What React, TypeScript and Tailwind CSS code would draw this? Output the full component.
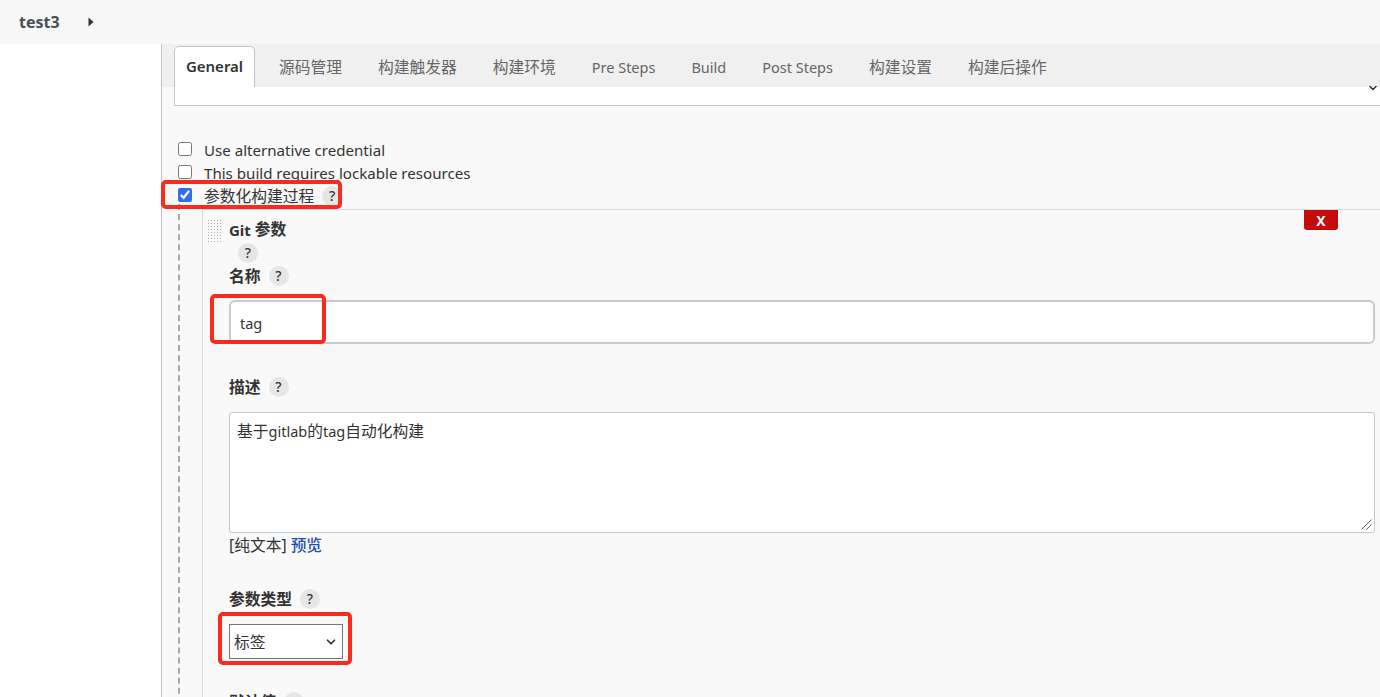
import type { ReactNode } from "react";
import { ChevronDown } from "lucide-react";

const tabs = [
  { label: "源码管理", size: "text-[15.75px]" },
  { label: "构建触发器", size: "text-[15.75px]" },
  { label: "构建环境", size: "text-[15.75px]" },
  { label: "Pre Steps", size: "text-[14.5px]" },
  { label: "Build", size: "text-[14.5px]" },
  { label: "Post Steps", size: "text-[14.5px]" },
  { label: "构建设置", size: "text-[15.75px]" },
  { label: "构建后操作", size: "text-[15.75px]" },
];

function Help({ className = "" }: { className?: string }) {
  return (
    <span className={`flex h-5 w-5 shrink-0 items-center justify-center rounded-full bg-[#e6e6e6] text-[14px] font-medium leading-none text-[#333] ${className}`}>
      ?
    </span>
  );
}

function CheckRow({ children, checked = false, help = false }: { children: ReactNode; checked?: boolean; help?: boolean }) {
  return (
    <div className="flex h-[23px] items-center">
      <input type="checkbox" defaultChecked={checked} className="mb-[2px] ml-[16px] h-[14px] w-[14px] accent-[#2f6fed]" />
      <span className="ml-[12px] mt-[1px] text-[#333]">{children}</span>
      {help && <Help className="ml-[8px] mt-[1px]" />}
    </div>
  );
}

function FieldLabel({ label }: { label: string }) {
  return (
    <div className="flex h-[24px] items-center">
      <span className="mt-[2px] text-[15.75px] font-semibold text-[#333]">{label}</span>
      <Help className="ml-[8px]" />
    </div>
  );
}

export default function App() {
  return (
    <div className="relative h-[697px] w-[1380px] overflow-hidden bg-white font-['Noto_Sans','Noto_Sans_CJK_SC',sans-serif]">
      {/* Top bar */}
      <div className="flex h-[44px] items-center bg-[#f7f7f7] pl-[19px]">
        <span className="text-[16px] font-bold text-[#4a4f57]">test3</span>
        <svg width="6" height="10" viewBox="0 0 6 10" className="ml-[28px]">
          <path d="M0.5 0.5 L5.5 5 L0.5 9.5 Z" fill="#333" />
        </svg>
      </div>

      <div className="flex h-[653px]">
        <div className="w-[161px] shrink-0 bg-white" />

        <div className="flex-1 border-l border-[#c0c5cc] bg-[#f9f9f9]">
          {/* Tabs */}
          <div className="flex h-[43px] items-end bg-[#f0f0f0] pl-[12px]">
            <div className="flex h-[41px] w-[81px] items-center justify-center rounded-t-[5px] border border-b-0 border-[#c0c5cc] bg-white pb-[1px] text-[15px] font-semibold text-[#333]">
              General
            </div>
            <div className="ml-[12px] flex h-[41px] gap-[12px]">
              {tabs.map((tab) => (
                <div key={tab.label} className={`flex items-center px-[12px] pt-[3px] text-[#666] ${tab.size}`}>
                  {tab.label}
                </div>
              ))}
            </div>
          </div>

          {/* Collapsed select remnant */}
          <div className="relative ml-[12px] h-[19px] border-b border-l border-[#c8c8c8] bg-white">
            <ChevronDown size={12} strokeWidth={3} className="absolute right-[1px] top-[-5px] text-[#333]" />
          </div>

          <div className="pt-[32px]">
            <CheckRow><span className="text-[15.1px]">Use alternative credential</span></CheckRow>
            <CheckRow><span className="text-[15.1px]">This build requires lockable resources</span></CheckRow>
            <CheckRow checked help><span className="text-[15.75px]">参数化构建过程</span></CheckRow>
          </div>

          {/* Parameter block */}
          <div className="mt-[2px] flex">
            <div className="ml-[16px] mt-[-5px] w-[1px] border-l-2 border-dashed border-[#aaa]" />
            <div className="ml-[22px] flex-1 border-l border-t border-[#d9d9d9]">
              <div className="relative pl-[26px] pr-[5px]">
                <div className="absolute right-[42px] top-0 flex h-[20px] w-[34px] items-center justify-center rounded-b-[3px] bg-[#c40a0a] text-[14px] font-bold text-white">
                  X
                </div>
                <div className="absolute left-[4px] top-[9px] h-[23px] w-[14px] bg-[radial-gradient(#aaaaaa_1px,transparent_1px)] bg-[length:3px_3px]" />

                <div className="flex h-[40px] items-center font-bold text-[#333]">
                  <span className="text-[15px]">Git&nbsp;</span>
                  <span className="text-[15.75px]">参数</span>
                </div>
                <Help className="ml-[9px] mt-[-7px]" />
                <div className="mt-[1px]">
                  <FieldLabel label="名称" />
                </div>
                <div className="mt-[12px] flex h-[44px] items-center rounded-[6px] border-2 border-[#c3cad2] bg-white pl-[9px] pt-[4px] text-[14.5px] text-[#333]">
                  tag
                </div>

                <div className="mt-[31px]">
                  <FieldLabel label="描述" />
                </div>
                <div className="relative mt-[13px] h-[121px] rounded-[3px] border border-[#c3cad2] bg-white px-[7px] py-[8px] text-[15.75px] leading-[20px] text-[#333]">
                  基于<span className="text-[14.5px]">gitlab</span>的<span className="text-[14.5px]">tag</span>自动化构建
                  <svg width="11" height="11" viewBox="0 0 11 11" className="absolute bottom-[2px] right-[2px]">
                    <path d="M10.5 0.5 L0.5 10.5 M10.5 5.5 L5.5 10.5" stroke="#666" strokeWidth="1" />
                  </svg>
                </div>
                <div className="flex h-[22px] items-center pt-[4px] text-[15.75px] text-[#333]">
                  [纯文本]<span className="ml-[4px] font-medium text-[#1a4fb5]">预览</span>
                </div>

                <div className="mt-[32px]">
                  <FieldLabel label="参数类型" />
                </div>
                <div className="mt-[13px] flex h-[35px] w-[114px] items-center justify-between border border-[#767676] bg-white px-[4px] text-[15.75px] text-[#333]">
                  <span className="mt-[2px]">标签</span>
                  <ChevronDown size={14} strokeWidth={3} className="text-[#333]" />
                </div>

                <div className="mt-[31px]">
                  <FieldLabel label="默认值" />
                </div>
              </div>
            </div>
          </div>
        </div>
      </div>

      {/* Red annotation boxes */}
      <div className="absolute left-[161px] top-[180px] h-[29px] w-[181px] rounded-[5px] border-[4px] border-[#fb2a1c]" />
      <div className="absolute left-[210px] top-[294px] h-[50px] w-[116px] rounded-[5px] border-[4px] border-[#fb2a1c]" />
      <div className="absolute left-[218px] top-[612px] h-[53px] w-[134px] rounded-[5px] border-[4px] border-[#fb2a1c]" />
    </div>
  );
}
